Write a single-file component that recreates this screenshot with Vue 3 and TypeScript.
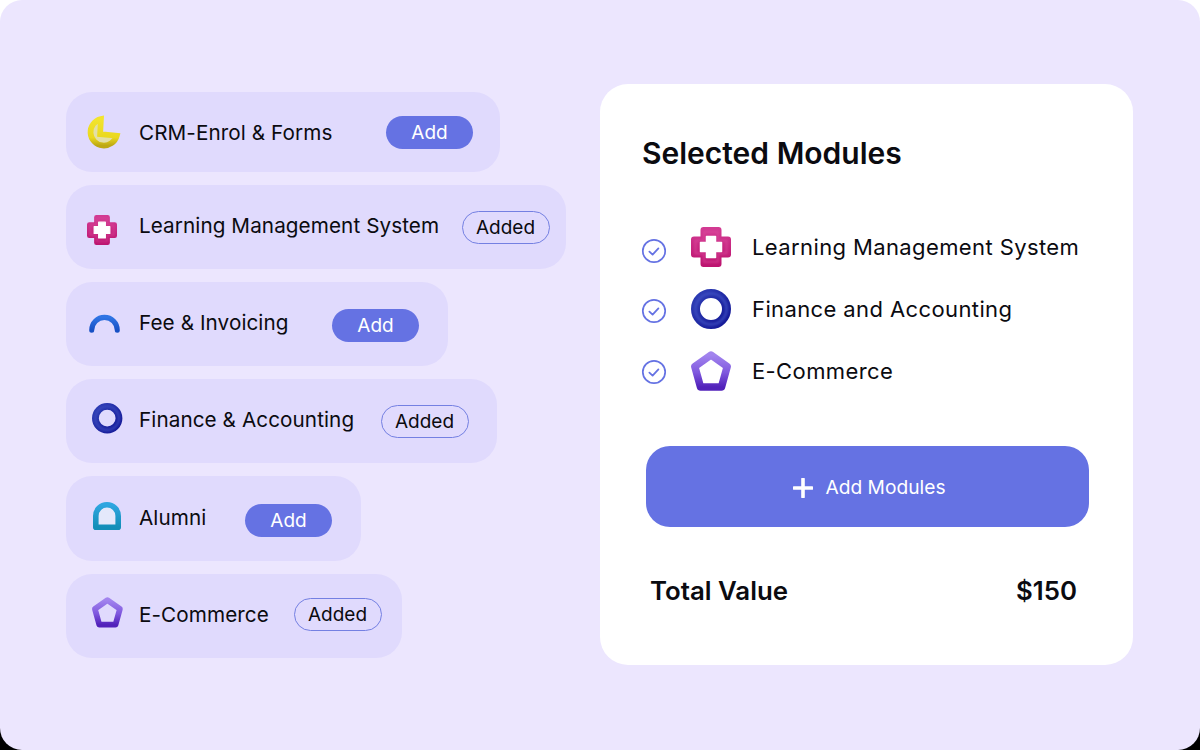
<template>
  <div class="page">
    <div class="modules">
      <div
        v-for="m in modules"
        :key="m.name"
        class="row"
        :style="{ width: m.width + 'px', height: m.height + 'px', paddingRight: m.pad + 'px' }"
      >
        <svg class="row-icon" viewBox="0 0 40 40" width="40" height="40" aria-hidden="true">
          <use :href="'#' + m.icon" :transform="m.place" />
        </svg>
        <span class="row-name" :style="{ marginBottom: m.nudge + 'px' }">{{ m.name }}</span>
        <span
          class="pill"
          :class="m.added ? 'pill-added' : 'pill-add'"
          :style="{ marginTop: m.pillDrop + 'px' }"
        >{{ m.added ? 'Added' : 'Add' }}</span>
      </div>
    </div>

    <div class="card">
      <h2 class="title">Selected Modules</h2>
      <ul class="selected">
        <li v-for="s in selected" :key="s.name" class="selected-row">
          <svg
            class="check"
            viewBox="0 0 26 26"
            width="26"
            height="26"
            aria-hidden="true"
            :style="{ marginTop: s.checkDrop + 'px' }"
          >
            <circle cx="13" cy="13" r="11.2" fill="none" stroke="#6572e3" stroke-width="1.7" />
            <path d="M8.4 13.6l3.2 3 5.8-6.2" fill="none" stroke="#6572e3" stroke-width="1.8" stroke-linecap="round" stroke-linejoin="round" />
          </svg>
          <svg class="selected-icon" viewBox="0 0 40 40" width="40" height="40" aria-hidden="true">
            <use :href="'#' + s.icon" />
          </svg>
          <span class="selected-name">{{ s.name }}</span>
        </li>
      </ul>
      <button class="add-btn" type="button">
        <svg viewBox="0 0 20 20" width="20" height="20" aria-hidden="true">
          <path d="M10 1v18M1 10h18" stroke="#fff" stroke-width="3.6" fill="none" stroke-linecap="round" />
        </svg>
        Add Modules
      </button>
      <div class="total">
        <span>Total Value</span>
        <span>$150</span>
      </div>
    </div>

    <svg class="defs" width="0" height="0" aria-hidden="true">
      <defs>
        <filter id="soft" x="-20%" y="-20%" width="140%" height="140%">
          <feGaussianBlur stdDeviation="1.3" />
        </filter>
        <linearGradient id="g-pink" x1="0" y1="0" x2="0" y2="1">
          <stop offset="0" stop-color="#d23a92" />
          <stop offset="1" stop-color="#bd1570" />
        </linearGradient>
        <linearGradient id="g-yellow" x1="0" y1="0" x2="0" y2="1">
          <stop offset="0" stop-color="#f2e42e" />
          <stop offset="0.7" stop-color="#ead81f" />
          <stop offset="1" stop-color="#bda812" />
        </linearGradient>
        <linearGradient id="g-blue" x1="0" y1="0" x2="0" y2="1">
          <stop offset="0" stop-color="#2f74e4" />
          <stop offset="1" stop-color="#1650c4" />
        </linearGradient>
        <linearGradient id="g-navy" x1="0" y1="0" x2="1" y2="1">
          <stop offset="0" stop-color="#2e3db4" />
          <stop offset="1" stop-color="#141896" />
        </linearGradient>
        <linearGradient id="g-teal" x1="0" y1="0" x2="0" y2="1">
          <stop offset="0" stop-color="#2fa6e0" />
          <stop offset="1" stop-color="#128eb8" />
        </linearGradient>
        <linearGradient id="g-purple" x1="0" y1="0" x2="0" y2="1">
          <stop offset="0" stop-color="#a284ee" />
          <stop offset="0.55" stop-color="#7f58de" />
          <stop offset="1" stop-color="#5222ba" />
        </linearGradient>

        <g id="i-crm">
          <path d="M17 3.800A16.300 16.300 0 1 0 36.300 24L16 22z" fill="#e3dfa6" stroke="url(#g-yellow)" stroke-width="7" stroke-linejoin="miter" />
        </g>
        <g id="i-plus" fill="none" stroke-linejoin="round">
          <path d="M12.500 3h15v9.500H37v15h-9.500V37h-15v-9.500H3v-15h9.500z" fill="url(#g-pink)" stroke="url(#g-pink)" stroke-width="6" />
          <path d="M13 5h14v8.500h8.500v13H27v8.500H13v-8.500H4.500v-13H13z" stroke="#e25aa6" stroke-width="1.500" stroke-opacity="0.55" filter="url(#soft)" />
          <path d="M15.500 9.500h9v6h6v9h-6v6h-9v-6h-6v-9h6z" fill="#fff" stroke="#fff" stroke-width="1.500" />
        </g>
        <g id="i-arc" fill="none" stroke-linecap="round">
          <path d="M3.500 26A16.500 16.500 0 0 1 36.500 26" stroke="url(#g-blue)" stroke-width="6.500" />
        </g>
        <g id="i-ring" fill="none">
          <circle cx="20" cy="20" r="15.500" stroke="url(#g-navy)" stroke-width="9" />
          <circle cx="20" cy="20" r="15.500" stroke="#4456c8" stroke-width="2.500" stroke-opacity="0.7" filter="url(#soft)" />
        </g>
        <g id="i-door" stroke-linejoin="round">
          <path d="M4 36V20a16 16 0 0 1 32 0v16z" fill="#e4e8fb" stroke="url(#g-teal)" stroke-width="8" />
        </g>
        <g id="i-penta" fill="none" stroke-linejoin="round">
          <path d="M20 4l16.200 11.500L30.500 36h-21L3.800 15.500z" stroke="url(#g-purple)" stroke-width="7.500" />
          <path d="M10 36h20" stroke="#4a1eb0" stroke-width="3" stroke-opacity="0.6" filter="url(#soft)" />
        </g>
      </defs>
    </svg>
  </div>
</template>

<script setup lang="ts">
interface Module {
  name: string
  icon: string
  place: string
  width: number
  height: number
  pad: number
  nudge: number
  pillDrop: number
  added: boolean
}

const modules: Module[] = [
  { name: 'CRM-Enrol & Forms', icon: 'i-crm', place: 'translate(2 4) scale(.82)', width: 434, height: 80, pad: 27, nudge: 0, pillDrop: 0, added: false },
  { name: 'Learning Management System', icon: 'i-plus', place: 'translate(2 8) scale(.75)', width: 500, height: 84, pad: 16, nudge: 4, pillDrop: 1, added: true },
  { name: 'Fee & Invoicing', icon: 'i-arc', place: 'translate(4 6) scale(.775)', width: 382, height: 84, pad: 29, nudge: 4, pillDrop: 2, added: false },
  { name: 'Finance & Accounting', icon: 'i-ring', place: 'translate(7 2) scale(.76)', width: 431, height: 84, pad: 28, nudge: 4, pillDrop: 1, added: true },
  { name: 'Alumni', icon: 'i-door', place: 'translate(8 3) scale(.7)', width: 295, height: 85, pad: 29, nudge: 3, pillDrop: 3, added: false },
  { name: 'E-Commerce', icon: 'i-penta', place: 'translate(7 1) scale(.77)', width: 336, height: 84, pad: 20, nudge: 4, pillDrop: -3, added: true },
]

const selected = [
  { name: 'Learning Management System', icon: 'i-plus', checkDrop: 8 },
  { name: 'Finance and Accounting', icon: 'i-ring', checkDrop: 4 },
  { name: 'E-Commerce', icon: 'i-penta', checkDrop: 2 },
]
</script>

<style>
html {
  background: linear-gradient(#fff 50%, #000 50%);
}

body {
  margin: 0;
}
</style>

<style scoped>
.page {
  width: 1200px;
  height: 750px;
  box-sizing: border-box;
  padding: 84px 67px 85px 66px;
  display: flex;
  justify-content: space-between;
  background: #ece6fe;
  border-radius: 22px;
  font-family: Inter, 'Liberation Sans', sans-serif;
  color: #0b0b10;
  overflow: hidden;
}

.modules {
  display: flex;
  flex-direction: column;
  gap: 13px;
  padding-top: 8px;
}

.row {
  box-sizing: border-box;
  display: flex;
  align-items: center;
  padding-left: 19px;
  background: #e0dafd;
  border-radius: 26px;
}

.row-icon {
  flex: none;
  margin-right: 14px;
  overflow: visible;
}

.row-name {
  font-size: 20.7px;
  flex: 1;
  white-space: nowrap;
  letter-spacing: 0.08px;
}

.pill {
  box-sizing: border-box;
  height: 33px;
  border-radius: 17px;
  display: flex;
  align-items: center;
  justify-content: center;
  font-size: 19px;
}

.pill-add {
  width: 87px;
  background: #6572e3;
  color: #fff;
}

.pill-added {
  width: 88px;
  padding-right: 1px;
  border: 1px solid #7480e2;
}

.card {
  width: 533px;
  box-sizing: border-box;
  background: #fff;
  border-radius: 28px;
  padding: 50px 44px 0 42px;
}

.title {
  margin: 0;
  font-size: 30px;
  font-weight: 600;
  line-height: 38px;
}

.selected {
  list-style: none;
  margin: 44px 0 0;
  padding: 0;
}

.selected-row {
  display: flex;
  align-items: center;
  height: 62px;
}

.check {
  flex: none;
  margin-left: -1px;
  margin-right: 24px;
}

.selected-icon {
  flex: none;
  margin-right: 21px;
}

.selected-name {
  font-size: 22px;
  letter-spacing: 0.39px;
  white-space: nowrap;
}

.add-btn {
  display: flex;
  align-items: center;
  justify-content: center;
  gap: 12px;
  width: 443px;
  height: 81px;
  margin: 44px 0 0 4px;
  padding: 0 0 0 4px;
  border: none;
  border-radius: 24px;
  background: #6572e3;
  color: #fff;
  font: inherit;
  font-size: 19.2px;
}

.add-btn svg {
  margin-top: 2px;
}

.total {
  display: flex;
  justify-content: space-between;
  margin: 46px 12px 0 8px;
  font-size: 25.8px;
  font-weight: 600;
  line-height: 36px;
}

.defs {
  position: absolute;
}
</style>
